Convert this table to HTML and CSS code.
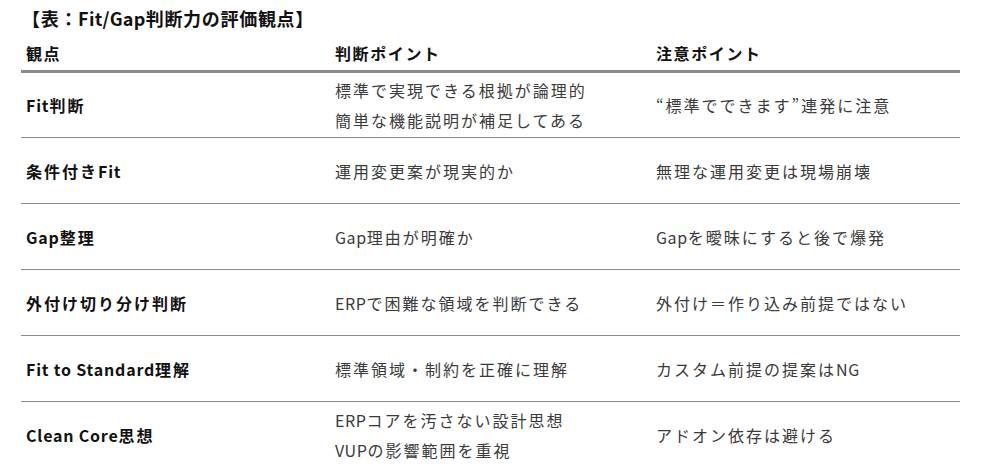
FILE: index.html
```html
<!DOCTYPE html>
<html lang="ja">
<head>
<meta charset="utf-8">
<link rel="stylesheet" href="styles.css">
</head>
<body>
<div class="page">
  <div class="title">【表：<span class="lat">Fit/Gap</span>判断力の評価観点】</div>
  <div class="table">
    <div class="row head">
      <div class="cell">観点</div>
      <div class="cell">判断ポイント</div>
      <div class="cell">注意ポイント</div>
    </div>
    <div class="row first">
      <div class="cell key"><span class="lat">Fit</span>判断</div>
      <div class="cell">標準で実現できる根拠が論理的<br>簡単な機能説明が補足してある</div>
      <div class="cell">“標準でできます”連発に注意</div>
    </div>
    <div class="row">
      <div class="cell key">条件付き<span class="lat">Fit</span></div>
      <div class="cell">運用変更案が現実的か</div>
      <div class="cell">無理な運用変更は現場崩壊</div>
    </div>
    <div class="row">
      <div class="cell key"><span class="lat">Gap</span>整理</div>
      <div class="cell"><span class="lat">Gap</span>理由が明確か</div>
      <div class="cell"><span class="lat">Gap</span>を曖昧にすると後で爆発</div>
    </div>
    <div class="row">
      <div class="cell key">外付け切り分け判断</div>
      <div class="cell"><span class="lat">ERP</span>で困難な領域を判断できる</div>
      <div class="cell">外付け＝作り込み前提ではない</div>
    </div>
    <div class="row">
      <div class="cell key"><span class="lat">Fit to Standard</span>理解</div>
      <div class="cell">標準領域・制約を正確に理解</div>
      <div class="cell">カスタム前提の提案は<span class="lat">NG</span></div>
    </div>
    <div class="row last">
      <div class="cell key"><span class="lat">Clean Core</span>思想</div>
      <div class="cell"><span class="lat">ERP</span>コアを汚さない設計思想<br><span class="lat">VUP</span>の影響範囲を重視</div>
      <div class="cell">アドオン依存は避ける</div>
    </div>
  </div>
</div>
</body>
</html>
```
FILE: styles.css
```css
html, body {
  margin: 0;
  padding: 0;
  background: #ffffff;
}
body {
  font-family: "Noto Sans CJK JP", "Noto Sans", sans-serif;
  color: #3a3a3a;
}
.page {
  padding: 6px 22px 0 21px;
  width: 939px;
}
.title {
  font-size: 18px;
  font-weight: 700;
  color: #111111;
  line-height: 24px;
  letter-spacing: 0.7px;
  padding-left: 1px;
}
.title .lat {
  letter-spacing: 0.3px;
}
.row {
  display: grid;
  grid-template-columns: 309px 321px 1fr;
  align-items: center;
  min-height: 65px;
  border-bottom: 1px solid #8a8a8a;
  font-size: 16px;
  line-height: 30px;
  letter-spacing: 2px;
}
.row .lat {
  letter-spacing: 0.6px;
}
.row.head {
  min-height: 0;
  height: 32px;
  padding-top: 8px;
  align-items: start;
  border-bottom: 3px solid #8a8a8a;
  font-weight: 700;
  color: #111111;
  letter-spacing: 1.6px;
}
.row.first {
  min-height: 64px;
}
.row.last {
  border-bottom: none;
}
.cell {
  padding-left: 5px;
}
.key {
  font-weight: 700;
  color: #111111;
  letter-spacing: 2px;
}
.key .lat {
  letter-spacing: 0.8px;
}
```
